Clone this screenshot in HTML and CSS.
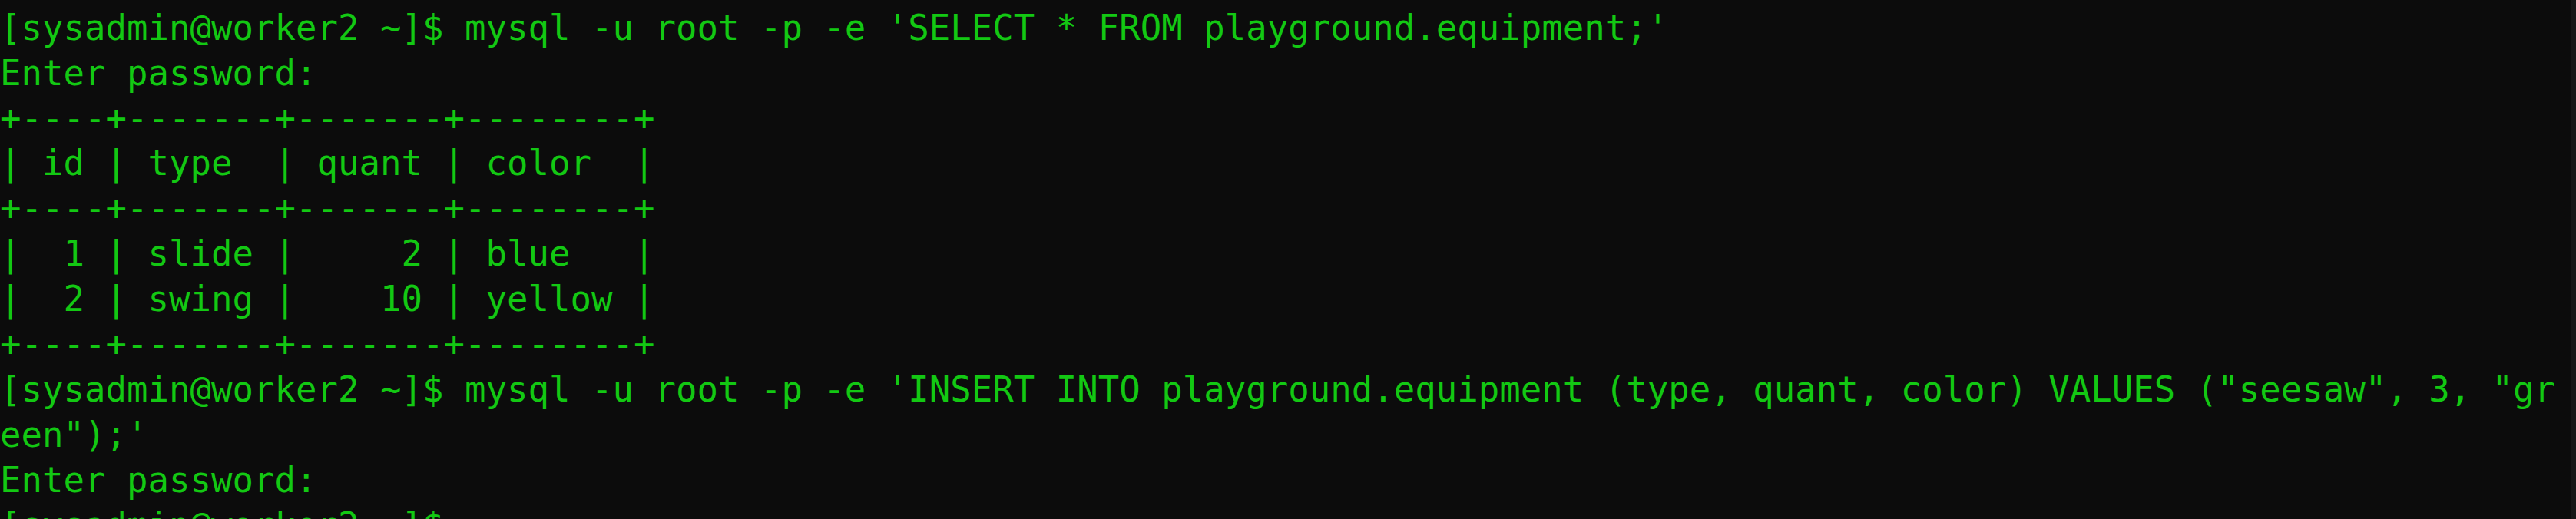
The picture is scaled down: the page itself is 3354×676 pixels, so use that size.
FILE: index.html
```html
<!DOCTYPE html>
<html lang="en">
<head>
<meta charset="utf-8">
<title>Terminal</title>
<link rel="stylesheet" href="styles.css">
</head>
<body>
<div class="window">
<div class="term">
<div class="line">[sysadmin@worker2 ~]$ mysql -u root -p -e 'SELECT * FROM playground.equipment;'</div>
<div class="line">Enter password:</div>
<div class="line">+----+-------+-------+--------+</div>
<div class="line">| id | type  | quant | color  |</div>
<div class="line">+----+-------+-------+--------+</div>
<div class="line">|  1 | slide |     2 | blue   |</div>
<div class="line">|  2 | swing |    10 | yellow |</div>
<div class="line">+----+-------+-------+--------+</div>
<div class="line">[sysadmin@worker2 ~]$ mysql -u root -p -e 'INSERT INTO playground.equipment (type, quant, color) VALUES ("seesaw", 3, "gr</div>
<div class="line">een");'</div>
<div class="line">Enter password:</div>
<div class="line">[sysadmin@worker2 ~]$ </div>
</div>
<div class="scrollbar"></div>
</div>
</body>
</html>
```
FILE: styles.css
```css
html, body {
  margin: 0;
  padding: 0;
  background: #0c0c0c;
  height: 100%;
  overflow: hidden;
}
.window {
  display: flex;
  height: 676px;
  background: #0c0c0c;
}
.term {
  flex: 1;
  margin: 0;
  padding: 7.75px 0 0 0;
  font-family: "DejaVu Sans Mono", monospace;
  font-size: 45.68px;
  line-height: 58.9px;
  color: #13c813;
  overflow: hidden;
}
.line {
  white-space: pre;
  height: 58.9px;
}
.scrollbar {
  width: 6px;
  background: #171717;
}
```
